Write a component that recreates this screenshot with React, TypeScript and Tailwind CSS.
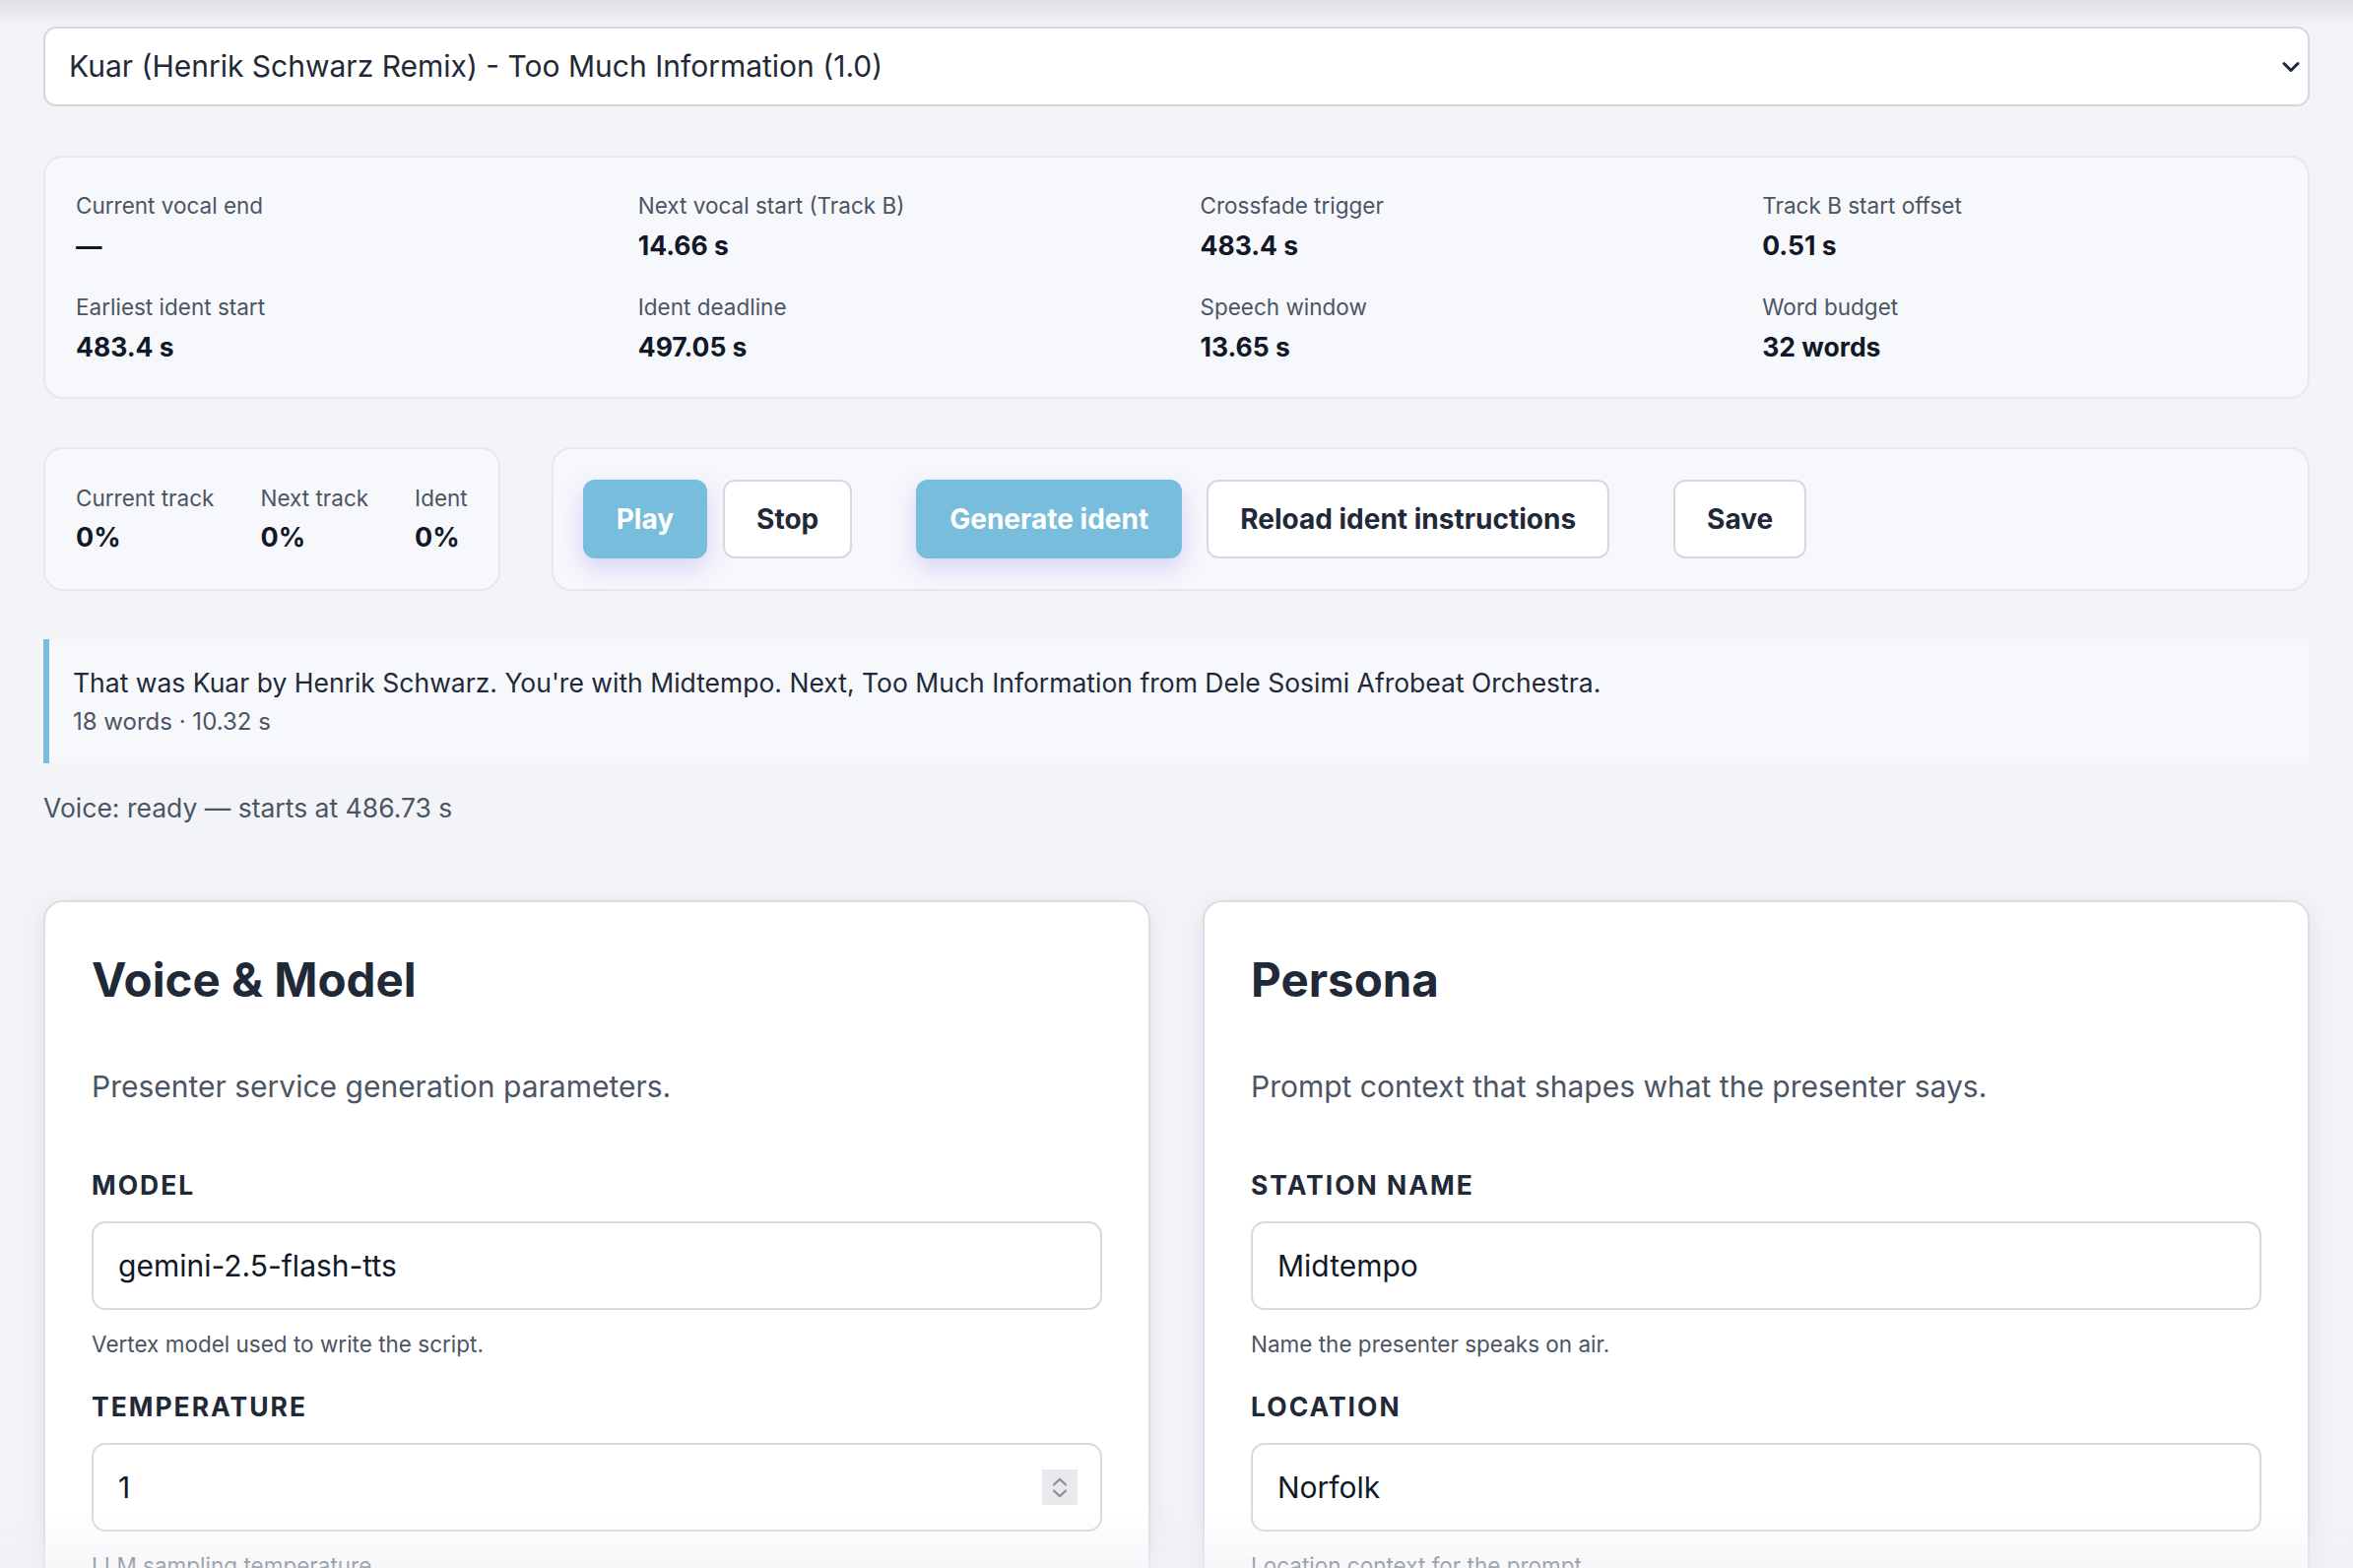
import React from "react";

const stats: [string, string][] = [
  ["Current vocal end", "—"],
  ["Next vocal start (Track B)", "14.66 s"],
  ["Crossfade trigger", "483.4 s"],
  ["Track B start offset", "0.51 s"],
  ["Earliest ident start", "483.4 s"],
  ["Ident deadline", "497.05 s"],
  ["Speech window", "13.65 s"],
  ["Word budget", "32 words"],
];

const progress: [string, string][] = [
  ["Current track", "0%"],
  ["Next track", "0%"],
  ["Ident", "0%"],
];

function Field({
  label,
  value,
  help,
  first,
  number,
}: {
  label: string;
  value: string;
  help: string;
  first?: boolean;
  number?: boolean;
}) {
  return (
    <div className={first ? "mt-[60px]" : "mt-[29px]"}>
      <div className="text-[26.5px] leading-[36px] font-bold uppercase tracking-[0.075em] text-[#1f2937]">
        {label}
      </div>
      <div className="relative mt-[19px]">
        <input
          readOnly
          value={value}
          className="w-full h-[90px] rounded-[14px] border-2 border-[#d7d9e1] bg-white px-[25px] text-[30px] text-[#111827] outline-none font-['Inter',sans-serif]"
        />
        {number && (
          <div className="absolute right-[25px] top-[27px] w-[36px] h-[36px] bg-[#e8e9ed] flex flex-col items-center justify-center gap-[3px]">
            <svg width="16" height="9" viewBox="0 0 16 9" fill="none">
              <path d="M2 7.5 L8 1.8 L14 7.5" stroke="#8b8e97" strokeWidth="2.2" strokeLinecap="round" strokeLinejoin="round" />
            </svg>
            <svg width="16" height="9" viewBox="0 0 16 9" fill="none">
              <path d="M2 1.5 L8 7.2 L14 1.5" stroke="#8b8e97" strokeWidth="2.2" strokeLinecap="round" strokeLinejoin="round" />
            </svg>
          </div>
        )}
      </div>
      <div className="mt-[19px] text-[22.5px] leading-[32px] text-[#4b5563]">{help}</div>
    </div>
  );
}

function Card({
  title,
  desc,
  children,
}: {
  title: string;
  desc: string;
  children: React.ReactNode;
}) {
  return (
    <div className="bg-white border-2 border-[#dcdee5] rounded-[20px] shadow-[0_6px_28px_rgba(15,23,42,0.08)] px-[47px] pt-[51px] pb-[48px]">
      <h2 className="text-[47.5px] leading-[56px] font-bold text-[#1f2937]">{title}</h2>
      <p className="mt-[58px] text-[30px] leading-[44px] text-[#4b5563]">{desc}</p>
      {children}
    </div>
  );
}

export default function App() {
  const btnBase =
    "h-[80px] rounded-[12px] border-2 px-[32px] text-[28px] font-bold flex items-center justify-center whitespace-nowrap";
  const blue =
    "bg-[#78bddc] border-[#78bddc] text-white shadow-[0_10px_26px_rgba(112,100,230,0.25)]";
  const white = "bg-white border-[#d6d8e0] text-[#1f2937]";
  return (
    <div className="min-h-screen bg-[#f3f4f8] font-['Inter',sans-serif] text-[#1f2937] overflow-hidden">
      <div className="h-[27px] bg-gradient-to-b from-[#dfe1e7] to-[#f3f4f8]" />
      <div className="px-[44px] pb-[80px]">
        {/* select */}
        <div className="h-[81px] bg-white border-2 border-[#d5d7df] rounded-[13px] flex items-center justify-between pl-[24px] pr-[8px]">
          <span className="text-[30px] text-[#1f2937]">
            Kuar (Henrik Schwarz Remix) - Too Much Information (1.0)
          </span>
          <svg width="18" height="12" viewBox="0 0 18 12" fill="none">
            <path d="M2 2.5 L9 9.5 L16 2.5" stroke="#1f2937" strokeWidth="3" strokeLinecap="round" strokeLinejoin="round" />
          </svg>
        </div>

        {/* stats */}
        <div className="mt-[50px] bg-[#f7f8fc] border-2 border-[#e7e8ed] rounded-[20px] pt-[33px] pb-[33px] px-[31px] grid grid-cols-4 gap-x-[48px] gap-y-[29px]">
          {stats.map(([l, v]) => (
            <div key={l}>
              <div className="text-[22.5px] leading-[32px] text-[#4b5563]">{l}</div>
              <div className="mt-[6px] text-[26.5px] leading-[36px] font-bold text-[#111827]">{v}</div>
            </div>
          ))}
        </div>

        {/* progress + buttons */}
        <div className="mt-[49px] flex gap-[52px] items-stretch">
          <div className="bg-[#f7f8fc] border-2 border-[#e7e8ed] rounded-[20px] px-[31px] pt-[32px] pb-[32px] flex gap-[47px]">
            {progress.map(([l, v]) => (
              <div key={l}>
                <div className="text-[22.5px] leading-[36px] text-[#4b5563] whitespace-nowrap">{l}</div>
                <div className="mt-[2px] text-[27px] leading-[40px] font-bold text-[#111827]">{v}</div>
              </div>
            ))}
          </div>
          <div className="flex-1 bg-[#f7f8fc] border-2 border-[#e7e8ed] rounded-[20px] px-[30px] py-[31px] flex items-center">
            <button className={`${btnBase} ${blue}`}>Play</button>
            <button className={`${btnBase} ${white} ml-[16px]`}>Stop</button>
            <button className={`${btnBase} ${blue} ml-[65px]`}>Generate ident</button>
            <button className={`${btnBase} ${white} ml-[25px]`}>Reload ident instructions</button>
            <button className={`${btnBase} ${white} ml-[65px]`}>Save</button>
          </div>
        </div>

        {/* quote */}
        <div className="mt-[49px] bg-[#f7f8fc] border-l-[6px] border-[#78bddc] pl-[24px] pt-[24px] pb-[25px]">
          <div className="text-[26.5px] leading-[40px] text-[#1f2937]">
            That was Kuar by Henrik Schwarz. You're with Midtempo. Next, Too Much Information from Dele Sosimi Afrobeat Orchestra.
          </div>
          <div className="mt-[3px] text-[24px] leading-[34px] text-[#4b5563]">18 words · 10.32 s</div>
        </div>

        <div className="mt-[25px] text-[26.5px] leading-[40px] text-[#4b5563]">
          Voice: ready — starts at 486.73 s
        </div>

        {/* cards */}
        <div className="mt-[74px] grid grid-cols-2 gap-[53px]">
          <Card title="Voice & Model" desc="Presenter service generation parameters.">
            <Field first label="Model" value="gemini-2.5-flash-tts" help="Vertex model used to write the script." />
            <Field number label="Temperature" value="1" help="LLM sampling temperature." />
          </Card>
          <Card title="Persona" desc="Prompt context that shapes what the presenter says.">
            <Field first label="Station name" value="Midtempo" help="Name the presenter speaks on air." />
            <Field label="Location" value="Norfolk" help="Location context for the prompt." />
          </Card>
        </div>
      </div>
      <div className="fixed bottom-0 left-0 right-0 h-[60px] bg-gradient-to-t from-[rgba(240,241,245,0.55)] to-transparent pointer-events-none" />
    </div>
  );
}
